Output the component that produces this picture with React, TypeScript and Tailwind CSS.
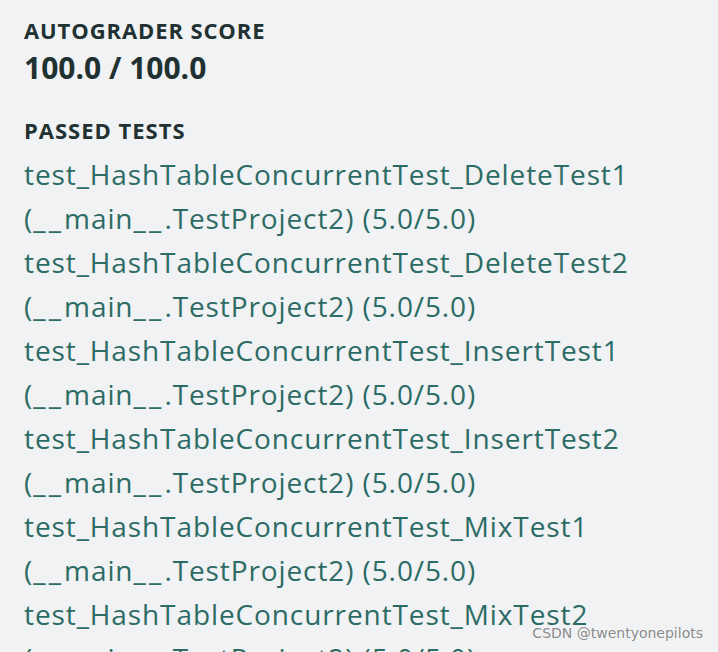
import React from "react";

const tests = [
  "DeleteTest1",
  "DeleteTest2",
  "InsertTest1",
  "InsertTest2",
  "MixTest1",
  "MixTest2",
];

export default function App() {
  return (
    <div
      className="relative w-[718px] h-[652px] overflow-hidden bg-[#f1f2f4]"
      style={{ fontFamily: "'Open Sans', Lato, sans-serif" }}
    >
      <div className="pl-6 pt-[16px]">
        <div className="text-[22px] leading-[28px] font-bold tracking-[0.9px] text-[#213131]">AUTOGRADER SCORE</div>
        <div className="mt-[6px] text-[30px] leading-[36px] font-bold text-[#213131]">100.0 / 100.0</div>
        <div className="mt-[30px] text-[22px] leading-[28px] font-bold tracking-[1px] text-[#213131]">PASSED TESTS</div>
        <ul className="mt-[8px]">
          {tests.map((t) => (
            <li key={t} className="text-[28px] leading-[44px] tracking-[0.9px] text-[#2d6b65]">
              <div className="whitespace-nowrap">test_HashTableConcurrentTest_{t}</div>
              <div className="whitespace-nowrap">
                (<span className="tracking-[3.2px]">__</span>main<span className="tracking-[3.2px]">__</span>.TestProject2) (5.0/5.0)
              </div>
            </li>
          ))}
        </ul>
      </div>
      <div
        className="absolute right-[15px] bottom-[8px] text-[14px] text-[#8a8a8a] [text-shadow:0_0_2px_#ffffff]"
        style={{ fontFamily: "'DejaVu Sans', sans-serif" }}
      >
        CSDN @twentyonepilots
      </div>
    </div>
  );
}
